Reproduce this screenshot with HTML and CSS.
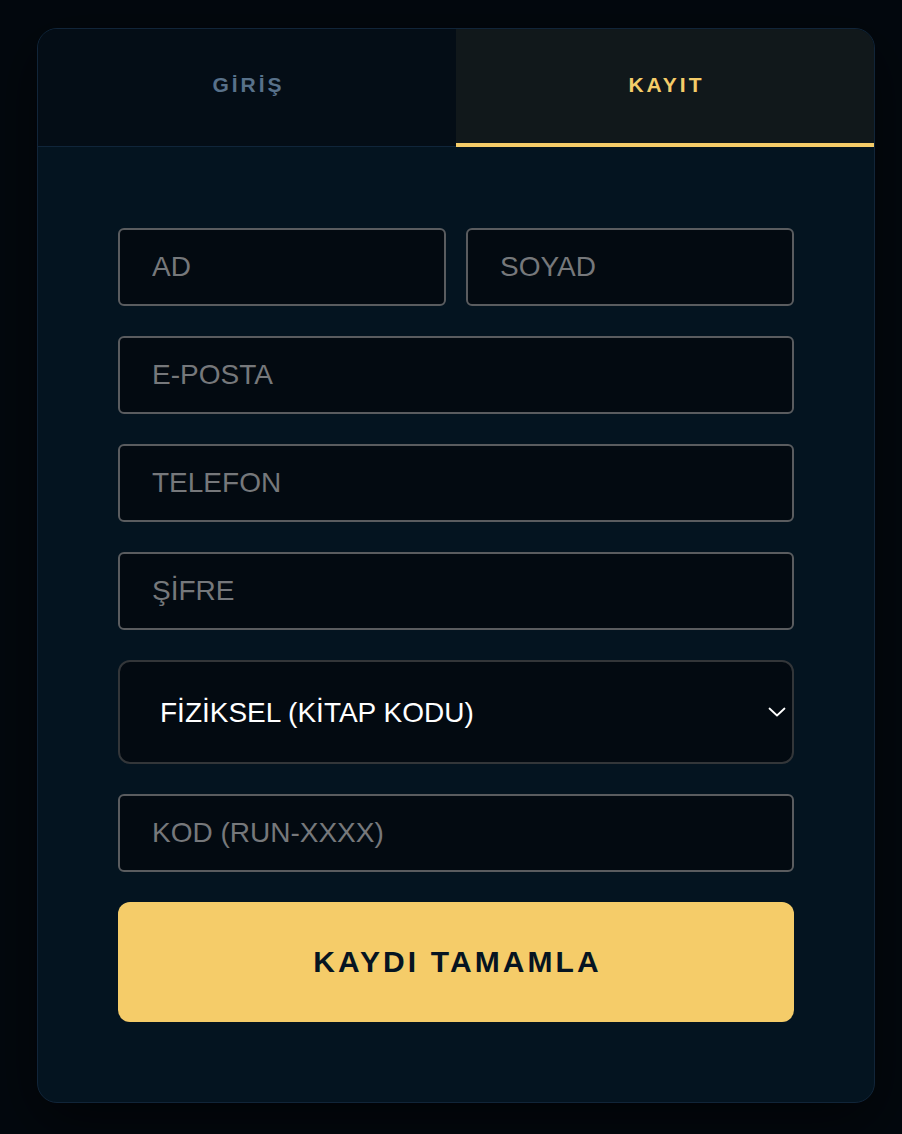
FILE: index.html
```html
<!DOCTYPE html>
<html lang="tr">
<head>
<meta charset="utf-8">
<title>Kayıt</title>
<link rel="stylesheet" href="styles.css">
</head>
<body>
<div class="card">
  <div class="tabs">
    <div class="tab">GİRİŞ</div>
    <div class="tab active">KAYIT</div>
  </div>
  <form class="form">
    <div class="row two">
      <input class="field" type="text" placeholder="AD">
      <input class="field" type="text" placeholder="SOYAD">
    </div>
    <input class="field" type="email" placeholder="E-POSTA">
    <input class="field" type="tel" placeholder="TELEFON">
    <input class="field" type="password" placeholder="ŞİFRE">
    <div class="select-wrap">
      <select class="select">
        <option>FİZİKSEL (KİTAP KODU)</option>
        <option>DİJİTAL</option>
      </select>
      <svg class="chevron" width="18" height="10" viewBox="0 0 18 10" aria-hidden="true">
        <path d="M1.5 1.5 L9 8.5 L16.5 1.5" fill="none" stroke="#ffffff" stroke-width="1.8" stroke-linecap="round" stroke-linejoin="round"/>
      </svg>
    </div>
    <input class="field" type="text" placeholder="KOD (RUN-XXXX)">
    <button class="submit" type="button">KAYDI TAMAMLA</button>
  </form>
</div>
</body>
</html>
```

FILE: styles.css
```css
* {
  box-sizing: border-box;
}

html, body {
  margin: 0;
  padding: 0;
}

body {
  background: #03080e;
  font-family: "Liberation Sans", Arial, sans-serif;
  min-height: 1134px;
  padding: 28px 0 0 37px;
}

.card {
  width: 838px;
  background: #041420;
  border: 1px solid #112539;
  border-radius: 20px;
  overflow: hidden;
  box-shadow: 0 18px 60px rgba(0, 0, 0, 0.55);
}

.tabs {
  display: grid;
  grid-template-columns: 1fr 1fr;
  height: 118px;
}

.tab {
  display: flex;
  align-items: center;
  justify-content: center;
  padding-left: 3px;
  font-size: 21px;
  font-weight: bold;
  letter-spacing: 3px;
  color: #58718a;
  background: #040d16;
  border-bottom: 1px solid #10253a;
  padding-bottom: 5px;
}

.tab.active {
  color: #f5cc69;
  background: #11181b;
  border-bottom: 4px solid #f5cc69;
  padding-bottom: 2px;
}

.form {
  display: flex;
  flex-direction: column;
  gap: 30px;
  padding: 81px 80px 80px;
  margin: 0;
}

.row.two {
  display: grid;
  grid-template-columns: 1fr 1fr;
  gap: 20px;
}

.field {
  display: block;
  width: 100%;
  height: 78px;
  margin: 0;
  padding: 0 20px 0 32px;
  background: #030a11;
  border: 2px solid #5a5c5f;
  border-radius: 6px;
  color: #ffffff;
  font-family: "Liberation Sans", Arial, sans-serif;
  font-size: 28px;
  outline: none;
}

.field::placeholder {
  color: #76787b;
  opacity: 1;
}

.select-wrap {
  position: relative;
}

.select {
  display: block;
  width: 100%;
  height: 104px;
  margin: 0;
  padding: 0 40px 0 40px;
  background: #030a11;
  border: 2px solid #333639;
  border-radius: 12px;
  color: #ffffff;
  font-family: "Liberation Sans", Arial, sans-serif;
  font-size: 28px;
  appearance: none;
  -webkit-appearance: none;
  outline: none;
}

.chevron {
  position: absolute;
  right: 8px;
  top: 47px;
  pointer-events: none;
}

.submit {
  display: block;
  width: 100%;
  height: 120px;
  margin: 0;
  padding: 0 0 0 3px;
  background: #f5cc69;
  border: none;
  border-radius: 12px;
  color: #061421;
  font-family: "Liberation Sans", Arial, sans-serif;
  font-size: 30px;
  font-weight: bold;
  letter-spacing: 3.1px;
  cursor: pointer;
}
```
